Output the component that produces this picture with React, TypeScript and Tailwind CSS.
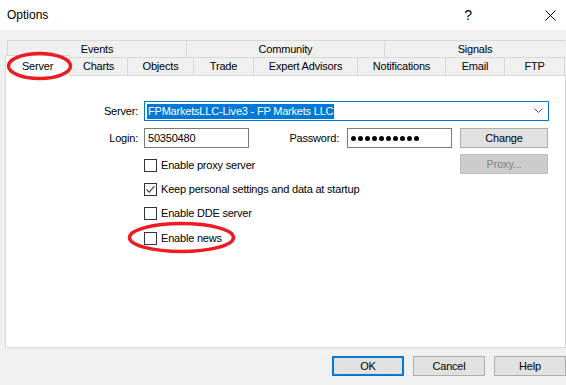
import React from "react";

const font = { fontFamily: '"Liberation Sans", Arial, sans-serif' };

function Checkbox({ checked, label }: { checked?: boolean; label: string }) {
  return (
    <div className="flex h-[24px] items-center">
      <div className="flex h-[13px] w-[13px] items-center justify-center border border-[#333333] bg-white">
        {checked && (
          <svg width="11" height="11" viewBox="0 0 11 11">
            <path d="M1.5 5.5 L4.2 8.2 L9.5 2.2" fill="none" stroke="#444" strokeWidth="1.2" />
          </svg>
        )}
      </div>
      <span className="ml-[4px] text-[11px] tracking-[-0.2px] text-black">{label}</span>
    </div>
  );
}

function Btn({ label, disabled, def, w }: { label: string; disabled?: boolean; def?: boolean; w: string }) {
  return (
    <div
      className={
        "flex h-[20px] items-center justify-center text-[11px] tracking-[-0.2px] " +
        w +
        " " +
        (disabled
          ? "border border-[#bfbfbf] bg-[#cccccc] text-[#838383]"
          : def
          ? "border-2 border-[#0078d7] bg-[#e1e1e1] text-black"
          : "border border-[#adadad] bg-[#e1e1e1] text-black")
      }
    >
      {label}
    </div>
  );
}

export default function App() {
  const row1 = [
    { t: "Events", w: "w-[179px]" },
    { t: "Community", w: "w-[198px]" },
    { t: "Signals", w: "w-[181px]" },
  ];
  const row2 = [
    { t: "Charts", w: "w-[58px]" },
    { t: "Objects", w: "w-[66px]" },
    { t: "Trade", w: "w-[60px]" },
    { t: "Expert Advisors", w: "w-[104px]" },
    { t: "Notifications", w: "w-[88px]" },
    { t: "Email", w: "w-[59px]" },
    { t: "FTP", w: "w-[60px]" },
  ];
  return (
    <div className="relative h-[385px] w-[566px] overflow-hidden bg-[#f0f0f0]" style={font}>
      {/* Title bar */}
      <div className="flex h-[30px] items-center bg-white">
        <span className="ml-[7px] text-[12px] text-black">Options</span>
        <div className="flex-1" />
        <span className="mr-[73px] text-[14px] text-black">?</span>
        <svg width="11" height="11" viewBox="0 0 11 11" className="mr-[10px]">
          <path d="M0.5 0.5 L10.5 10.5 M10.5 0.5 L0.5 10.5" stroke="#000" strokeWidth="1" />
        </svg>
      </div>

      {/* Tabs row 1 */}
      <div className="ml-[7px] mt-[10px] flex h-[17px]">
        {row1.map((r) => (
          <div
            key={r.t}
            className={
              "flex items-center justify-center border-l border-t border-[#d9d9d9] text-[11px] tracking-[-0.2px] text-black " +
              r.w
            }
          >
            {r.t}
          </div>
        ))}
      </div>

      {/* Tabs row 2 */}
      <div className="ml-[5px] flex h-[18px] items-end border-t border-[#d9d9d9]">
        <div className="relative z-10 mb-[-1px] flex h-[21px] w-[65px] items-start justify-center border-l border-r border-t border-[#d9d9d9] bg-white pt-[2px] text-[11px] tracking-[-0.2px] text-black">
          Server
        </div>
        {row2.map((r) => (
          <div
            key={r.t}
            className={
              "flex h-[17px] items-center justify-center border-r border-[#d9d9d9] text-[11px] tracking-[-0.2px] text-black " +
              r.w
            }
          >
            {r.t}
          </div>
        ))}
      </div>

      {/* Panel */}
      <div className="ml-[5px] h-[273px] w-[561px] border border-[#d9d9d9] bg-white pt-[25px]">
        {/* Server row */}
        <div className="flex h-[20px] items-center">
          <div className="w-[132px] text-right text-[11px] tracking-[-0.2px] text-black">Server:</div>
          <div className="ml-[6px] flex h-[20px] w-[405px] items-center border border-[#0078d7] bg-white">
            <span className="ml-[2px] bg-[#0078d7] px-[1px] text-[11px] leading-[15px] tracking-[-0.2px] text-white">
              FPMarketsLLC-Live3 - FP Markets LLC
            </span>
            <div className="flex-1" />
            <svg width="9" height="6" viewBox="0 0 9 6" className="mr-[5px]">
              <path d="M0.5 0.5 L4.5 4.5 L8.5 0.5" fill="none" stroke="#555" strokeWidth="1" />
            </svg>
          </div>
        </div>

        {/* Login row */}
        <div className="mt-[7px] flex h-[20px] items-center">
          <div className="w-[132px] text-right text-[11px] tracking-[-0.2px] text-black">Login:</div>
          <div className="ml-[6px] flex h-[20px] w-[105px] items-center border border-[#7a7a7a] bg-white pl-[3px] text-[11px] tracking-[-0.2px] text-black">
            50350480
          </div>
          <div className="w-[90px] text-right text-[11px] tracking-[-0.2px] text-black">Password:</div>
          <div className="ml-[8px] flex h-[20px] w-[105px] items-center gap-[2px] border border-[#7a7a7a] bg-white pl-[3px]">
            {Array.from({ length: 10 }).map((_, i) => (
              <div key={i} className="h-[5px] w-[5px] rounded-full bg-black" />
            ))}
          </div>
          <div className="ml-[8px]">
            <Btn label="Change" w="w-[88px]" />
          </div>
        </div>

        {/* Checkboxes + proxy */}
        <div className="mt-[5px] flex">
          <div className="ml-[138px] flex w-[316px] flex-col">
            <Checkbox label="Enable proxy server" />
            <Checkbox checked label="Keep personal settings and data at startup" />
            <Checkbox label="Enable DDE server" />
            <div className="mt-[1px]">
              <Checkbox label="Enable news" />
            </div>
          </div>
          <div className="mt-[1px]">
            <Btn label="Proxy..." disabled w="w-[88px]" />
          </div>
        </div>
      </div>

      {/* Bottom buttons */}
      <div className="mt-[8px] flex">
        <div className="ml-[332px] flex gap-[9px]">
          <Btn label="OK" def w="w-[72px]" />
          <Btn label="Cancel" w="w-[72px]" />
          <Btn label="Help" w="w-[72px]" />
        </div>
      </div>

      {/* Red annotation ellipses */}
      <svg className="pointer-events-none absolute left-0 top-0 z-20" width="566" height="385">
        <ellipse cx="39.5" cy="66" rx="31" ry="12.5" fill="none" stroke="#ed1c24" strokeWidth="3.5" />
        <ellipse cx="181.5" cy="237.5" rx="52" ry="14" fill="none" stroke="#ed1c24" strokeWidth="3.5" />
      </svg>
    </div>
  );
}
